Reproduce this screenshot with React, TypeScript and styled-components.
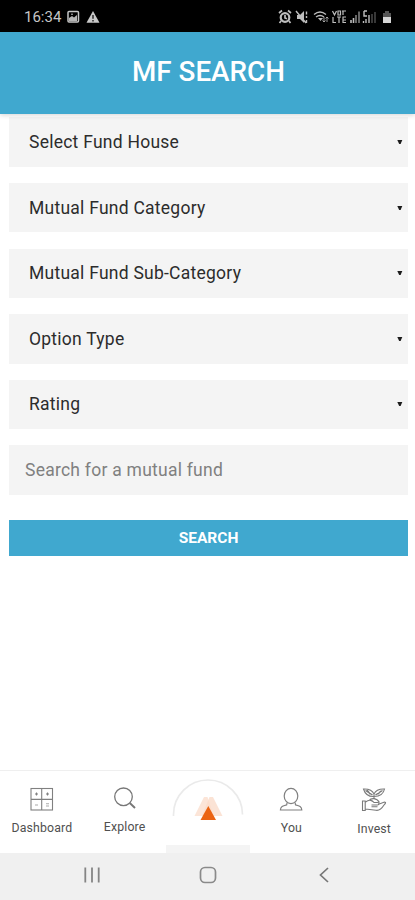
import React from "react";
import styled, { createGlobalStyle } from "styled-components";

const GlobalStyle = createGlobalStyle`
  * { box-sizing: border-box; }
  body { margin: 0; background: #fff; font-family: Roboto, sans-serif; }
  svg { display: block; flex: none; }
`;

const Screen = styled.div`
  width: 415px;
  height: 900px;
  display: flex;
  flex-direction: column;
  overflow: hidden;
  background: #fff;
`;

const StatusBar = styled.div`
  height: 32px;
  flex: none;
  padding: 2px 22px 0 24px;
  display: flex;
  align-items: center;
  justify-content: space-between;
  background: #000;
  color: #c6c6c6;
`;

const StatusLeft = styled.div`
  display: flex;
  align-items: center;
  gap: 6px;
`;

const Clock = styled.span`
  width: 37px;
  font-size: 15px;
  line-height: 18px;
  white-space: nowrap;
`;

const Header = styled.header`
  height: 82px;
  flex: none;
  display: flex;
  align-items: center;
  justify-content: center;
  padding: 0 0 2px 2px;
  background: #40a8cf;
  box-shadow: 0 1px 5px rgba(0, 0, 0, 0.18);
  z-index: 1;
`;

const Title = styled.h1`
  margin: 0;
  font-size: 27.8px;
  line-height: 32px;
  font-weight: 500;
  color: #fff;
`;

const Form = styled.main`
  flex: 1;
  min-height: 0;
  padding: 3.4px 7px 0 9px;
  display: flex;
  flex-direction: column;
  gap: 16.2px;
`;

const Field = styled.div<{ $input?: boolean }>`
  height: 49.4px;
  flex: none;
  display: flex;
  align-items: center;
  justify-content: space-between;
  padding: 0 5px 0 ${(p) => (p.$input ? 16 : 20)}px;
  background: #f4f4f4;
  color: ${(p) => (p.$input ? "#808080" : "#2c2c2c")};
  font-size: 17.5px;
  line-height: 22px;
  letter-spacing: 0.25px;
`;

const SearchButton = styled.button`
  height: 36px;
  flex: none;
  margin: 8.7px 0 0;
  padding: 0;
  border: 0;
  background: #40a8cf;
  color: #fff;
  font: 700 15.5px/20px Roboto, sans-serif;
`;

const TabBar = styled.nav`
  height: 83px;
  flex: none;
  display: grid;
  grid-template-columns: repeat(5, 1fr);
  border-top: 1px solid #efefef;
`;

const Tab = styled.div<{ $drop?: number }>`
  display: flex;
  flex-direction: column;
  align-items: center;
  gap: 5px;
  padding: ${(p) => 14 + (p.$drop ?? 0)}px 0 0 1px;
  font-size: 12.3px;
  line-height: 16px;
  letter-spacing: 0.15px;
  color: #505050;
`;

const CenterTab = styled.div`
  display: flex;
  flex-direction: column;
  align-items: center;
  justify-content: space-between;
  padding-top: 8px;
`;

const ActiveMark = styled.div`
  width: 84px;
  height: 8px;
  background: #f4f4f4;
`;

const SystemBar = styled.div`
  height: 47px;
  flex: none;
  display: grid;
  grid-template-columns: 92px 140px 92px;
  padding: 0 0 3px 46px;
  align-items: center;
  justify-items: center;
  background: #f0f0f0;
`;

const Caret = () => (
  <svg width="6" height="6" viewBox="0 0 6 6">
    <path d="M.3 1h5L3.600 5H2.200z" fill="#1c1c1c" />
  </svg>
);

const NoticeIcons = () => (
  <svg width="33" height="14" viewBox="0 0 33 14" fill="none">
    <rect x="1" y="1.5" width="10.5" height="10.5" rx="1" stroke="#c6c6c6" strokeWidth="1.5" />
    <path d="M2 10V8l3-2 2 1.5L10 5v6H2z" fill="#b6b6b6" />
    <path d="M4 4.2h2" stroke="#c6c6c6" />
    <path d="M26 1l6.5 11.7H19.5z" fill="#c8c8c8" />
    <path d="M26 5v3.8M26 10v1.5" stroke="#111" strokeWidth="1.3" />
  </svg>
);

const DeviceIcons = () => (
  <svg width="115" height="16" viewBox="0 0 115 16" fill="none" stroke="#bdbdbd">
    <circle cx="7" cy="8.5" r="4.3" strokeWidth="2.2" />
    <path d="M1 4l3-2.500M13 4l-3-2.500M3 12l-1.500 2M11 12l1.500 2M7 6v3l2 .8" strokeWidth="1.7" />
    <path d="M19 6h3l4-4v12l-4-4h-3z" fill="#bdbdbd" stroke="none" />
    <path d="M18 2l10 12M28.500 2.500v3M28.500 7v2M28.500 11v3" strokeWidth="1.4" />
    <path d="M36 5.500q6-5 12 0M38 8q4-3 8 0" strokeWidth="1.3" />
    <path d="M40 9l2.500 3L45 9z" fill="#bdbdbd" stroke="none" />
    <path d="M46 8v5m-1.500-1.500L46 13l1.500-1.500M49 13V8m-1.500 1.500L49 8l1.500 1.500" strokeWidth=".8" />
    <path d="M54.500 2l2 4 2-4M60 2h2.500v4H60zM65 2v4M64 2h4M55 8v5.500h3M59 8h4M61 8v6M68 8h-3v5.500h3M65 11h3" strokeWidth="1.2" />
    <path d="M73 11v3M75.500 9v5" strokeWidth="1.6" />
    <path d="M78 6v8M81 2.500V14" stroke="#777" strokeWidth="1.7" />
    <path d="M86 2v5h3M86 2h3M91 6v8M88 10v4M85.500 12v2" strokeWidth="1.4" />
    <path d="M94 5v9M97 3v11" stroke="#555" strokeWidth="1.3" />
    <path d="M107 2h4v2h2v4h-8V4h2z" fill="#555" stroke="none" />
    <path d="M105 8h8v6h-8z" fill="#d6d6d6" stroke="none" />
  </svg>
);

const DashboardIcon = () => (
  <svg width="26" height="30" viewBox="0 0 26 30" fill="none" stroke="#808080" strokeWidth="1.1">
    <rect x="2" y="3.500" width="21.500" height="21.500" />
    <path d="M12.700 3.500V25M2 14.400h21.500" />
    <path d="M7.500 7.500v3M6 9h3M18.500 7.500v3M17 9h3" />
    <path d="M6 20h3M17 18.800h3M17 21h3" stroke="#aaa" />
  </svg>
);

const ExploreIcon = () => (
  <svg width="26" height="29" viewBox="0 0 26 29" fill="none" stroke="#777" strokeWidth="1.3">
    <circle cx="11.500" cy="11.800" r="8.800" />
    <path d="M17.800 18l5.200 5" strokeWidth="1.900" />
  </svg>
);

const YouIcon = () => (
  <svg width="26" height="30" viewBox="0 0 26 30" fill="none" stroke="#808080" strokeWidth="1.2">
    <ellipse cx="13" cy="11" rx="6.800" ry="7.700" />
    <path d="M9.100 17.500l-.4 2.300c-4 1-6.200 1.600-6.300 5.200h21.400c-.1-3.600-2.300-4.200-6.300-5.200l-.4-2.300" />
  </svg>
);

const InvestIcon = () => (
  <svg width="26" height="30" viewBox="0 0 26 30" fill="none" stroke="#7a7a7a" strokeWidth="1.1">
    <path d="M13 10.500C7 10.800 4 8 2.500 3c4.500-.2 9 1.500 10.500 5C14.500 4.500 18.500 2.800 23.500 3c-1 5-4.300 7.500-10.500 7.500zM13 8v5" />
    <path d="M4.500 4.500l7 4.500M21.500 4.500l-7 4.500M6 4l3 4M20 5l-3 3" strokeWidth="1.4" />
    <path d="M1.500 15h2.700v9.500H1.500zM4.500 16c4-3 7-1.500 8.500.500h3.500c2 0 2 2.500 0 2.500h-6M17 18.500l6.500-2.500c2 0 .8 1.500-.5 3-2 3.200-4.500 6-8 5.300L4.500 23M8 14.500c2.300-2.800 7.500-2.800 10.500 2M10.500 20.800h6" />
  </svg>
);

const BrandMark = () => (
  <svg width="74" height="46" viewBox="0 0 74 46" fill="none">
    <path d="M2.500 37v-1.500a34.500 34.500 0 0 1 69 0V35" stroke="#eaeaea" strokeWidth="1.700" />
    <path d="M33 18h3.500L43 37H23.500z" fill="#fce5d8" />
    <path d="M38.500 18H42L51.500 37H31z" fill="#fadccb" fillOpacity=".8" />
    <path d="M37.300 27L45 41H29.500z" fill="#eb6312" />
  </svg>
);

const RecentsIcon = () => (
  <svg width="18" height="18" viewBox="0 0 18 18" stroke="#858585" strokeWidth="1.8">
    <path d="M2.300 1.500v15M9 1.500v15M15.700 1.500v15" />
  </svg>
);

const HomeIcon = () => (
  <svg width="18" height="18" viewBox="0 0 18 18" fill="none">
    <rect x="1.500" y="1.500" width="15" height="15" rx="4.500" stroke="#8a8a8a" strokeWidth="1.700" />
  </svg>
);

const BackIcon = () => (
  <svg width="12" height="18" viewBox="0 0 12 18" fill="none">
    <path d="M10 2L2.500 9l7.500 7" stroke="#777" strokeWidth="1.700" />
  </svg>
);

const selects = [
  "Select Fund House",
  "Mutual Fund Category",
  "Mutual Fund Sub-Category",
  "Option Type",
  "Rating",
];

export default function App() {
  return (
    <Screen>
      <GlobalStyle />
      <StatusBar>
        <StatusLeft>
          <Clock>16:34</Clock>
          <NoticeIcons />
        </StatusLeft>
        <DeviceIcons />
      </StatusBar>
      <Header>
        <Title>MF SEARCH</Title>
      </Header>
      <Form>
        {selects.map((label) => (
          <Field key={label}>
            <span>{label}</span>
            <Caret />
          </Field>
        ))}
        <Field $input>Search for a mutual fund</Field>
        <SearchButton>SEARCH</SearchButton>
      </Form>
      <TabBar>
        <Tab>
          <DashboardIcon />
          Dashboard
        </Tab>
        <Tab>
          <ExploreIcon />
          Explore
        </Tab>
        <CenterTab>
          <BrandMark />
          <ActiveMark />
        </CenterTab>
        <Tab>
          <YouIcon />
          You
        </Tab>
        <Tab $drop={0.6}>
          <InvestIcon />
          Invest
        </Tab>
      </TabBar>
      <SystemBar>
        <RecentsIcon />
        <HomeIcon />
        <BackIcon />
      </SystemBar>
    </Screen>
  );
}
